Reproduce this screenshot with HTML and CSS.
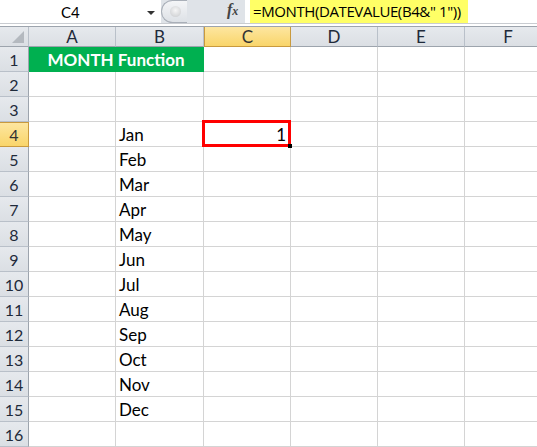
FILE: index.html
```html
<!DOCTYPE html>
<html>
<head>
<meta charset="utf-8">
<link rel="stylesheet" href="styles.css">
</head>
<body>
<div class="fbar">
  <div class="namebox"><span class="nb-text">C4</span><span class="nb-arrow"></span></div>
  <div class="mid">
    <div class="knob"><div class="dot"></div></div>
    <span class="fx">f<span class="fxx">x</span></span>
  </div>
  <div class="formula"><span class="hl">=MONTH(DATEVALUE(B4&amp;" 1"))</span></div>
</div>
<div class="sep"></div>
<div class="sheet">
  <div class="hd corner"><span class="tri"></span></div>
  <div class="hd col">A</div>
  <div class="hd col">B</div>
  <div class="hd col sel">C</div>
  <div class="hd col">D</div>
  <div class="hd col">E</div>
  <div class="hd col">F</div>

  <div class="hd row">1</div>
  <div class="c title">MONTH Function</div>
  <div class="c"></div><div class="c"></div><div class="c"></div><div class="c"></div>

  <div class="hd row">2</div><div class="c"></div><div class="c"></div><div class="c"></div><div class="c"></div><div class="c"></div><div class="c"></div>
  <div class="hd row">3</div><div class="c"></div><div class="c"></div><div class="c"></div><div class="c"></div><div class="c"></div><div class="c"></div>
  <div class="hd row sel">4</div><div class="c"></div><div class="c">Jan</div><div class="c active"><span class="num">1</span><span class="handle"></span></div><div class="c"></div><div class="c"></div><div class="c"></div>
  <div class="hd row">5</div><div class="c"></div><div class="c">Feb</div><div class="c"></div><div class="c"></div><div class="c"></div><div class="c"></div>
  <div class="hd row">6</div><div class="c"></div><div class="c">Mar</div><div class="c"></div><div class="c"></div><div class="c"></div><div class="c"></div>
  <div class="hd row">7</div><div class="c"></div><div class="c">Apr</div><div class="c"></div><div class="c"></div><div class="c"></div><div class="c"></div>
  <div class="hd row">8</div><div class="c"></div><div class="c">May</div><div class="c"></div><div class="c"></div><div class="c"></div><div class="c"></div>
  <div class="hd row">9</div><div class="c"></div><div class="c">Jun</div><div class="c"></div><div class="c"></div><div class="c"></div><div class="c"></div>
  <div class="hd row">10</div><div class="c"></div><div class="c">Jul</div><div class="c"></div><div class="c"></div><div class="c"></div><div class="c"></div>
  <div class="hd row">11</div><div class="c"></div><div class="c">Aug</div><div class="c"></div><div class="c"></div><div class="c"></div><div class="c"></div>
  <div class="hd row">12</div><div class="c"></div><div class="c">Sep</div><div class="c"></div><div class="c"></div><div class="c"></div><div class="c"></div>
  <div class="hd row">13</div><div class="c"></div><div class="c">Oct</div><div class="c"></div><div class="c"></div><div class="c"></div><div class="c"></div>
  <div class="hd row">14</div><div class="c"></div><div class="c">Nov</div><div class="c"></div><div class="c"></div><div class="c"></div><div class="c"></div>
  <div class="hd row">15</div><div class="c"></div><div class="c">Dec</div><div class="c"></div><div class="c"></div><div class="c"></div><div class="c"></div>
  <div class="hd row">16</div><div class="c"></div><div class="c"></div><div class="c"></div><div class="c"></div><div class="c"></div><div class="c"></div>
</div>
</body>
</html>
```
FILE: styles.css
```css
html, body {
  margin: 0;
  padding: 0;
  width: 537px;
  height: 447px;
  overflow: hidden;
  background: #fff;
  font-family: Lato, "Open Sans", "Liberation Sans", sans-serif;
}
.fbar {
  display: flex;
  height: 23px;
  border-bottom: 1px solid #c9ccd1;
  background: #fff;
}
.namebox {
  width: 161px;
  display: flex;
  align-items: center;
  position: relative;
  font-size: 15px;
  color: #000;
}
.nb-text {
  margin-left: 61px;
}
.nb-arrow {
  position: absolute;
  left: 147px;
  top: 11px;
  width: 0;
  height: 0;
  border-left: 4px solid transparent;
  border-right: 4px solid transparent;
  border-top: 4px solid #333;
}
.mid {
  width: 84px;
  background: #dfe3e8;
  display: flex;
  align-items: center;
  position: relative;
}
.knob {
  width: 26px;
  height: 23px;
  box-sizing: border-box;
  border: 1px solid #a9afb8;
  border-right: none;
  border-radius: 12px 0 0 12px;
  background: linear-gradient(#f4f5f7, #dde1e6);
  display: flex;
  align-items: center;
  justify-content: center;
}
.dot {
  width: 11px;
  height: 11px;
  border-radius: 50%;
  background: radial-gradient(circle at 50% 40%, #f6f6f6, #c7c9cc);
  margin-left: 2px;
}
.fx {
  position: absolute;
  left: 66px;
  top: 1px;
  font-family: "Liberation Serif", serif;
  font-style: italic;
  font-weight: bold;
  font-size: 16px;
  color: #444;
}
.fxx {
  font-size: 12px;
}
.formula {
  flex: 1;
  background: #fff;
  padding-left: 5px;
}
.hl {
  display: inline-block;
  background: #ffff66;
  height: 23px;
  line-height: 23px;
  font-size: 15px;
  padding: 0 7px 0 3px;
  font-family: "Open Sans", "Liberation Sans", sans-serif;
  letter-spacing: -0.4px;
  color: #000;
}
.sep {
  height: 2px;
  background: #fff;
  border-bottom: 1px solid #9da4ad;
}
.sheet {
  display: grid;
  grid-template-columns: 29px 87px 88px 87px 87px 87px 87px;
  grid-template-rows: 20px repeat(16, 25px);
}
.hd {
  background: linear-gradient(#e6e9ed, #dbdfe4);
  color: #1e2a3a;
  font-size: 17px;
  box-sizing: border-box;
  display: flex;
  align-items: center;
  justify-content: center;
}
.col {
  border-right: 1px solid #b9c0c9;
  border-bottom: 1px solid #9da4ad;
}
.row {
  border-right: 1px solid #9da4ad;
  border-bottom: 1px solid #b9c0c9;
  font-size: 16px;
}
.corner {
  border-right: 1px solid #b9c0c9;
  border-bottom: 1px solid #9da4ad;
  position: relative;
}
.tri {
  position: absolute;
  right: 4px;
  bottom: 3px;
  width: 0;
  height: 0;
  border-left: 12px solid transparent;
  border-bottom: 12px solid #b4b9bf;
}
.hd.sel {
  background: linear-gradient(#fde6a0, #f9d56a);
  border-color: #c99a3e;
  color: #333;
}
.col.sel {
  border-left: 1px solid #c99a3e;
  border-bottom: 1px solid #c99a3e;
}
.row.sel {
  border-right: 1px solid #c99a3e;
  border-top: 1px solid #c99a3e;
}
.c {
  box-sizing: border-box;
  border-right: 1px solid #d4d4d4;
  border-bottom: 1px solid #d4d4d4;
  font-size: 17px;
  color: #000;
  padding: 0 3px;
  display: flex;
  align-items: center;
  white-space: nowrap;
}
.title {
  grid-column: span 2;
  background: #00b050;
  color: #fff;
  font-weight: bold;
  justify-content: center;
  border-color: #00b050;
  font-size: 17px;
}
.active {
  position: relative;
  justify-content: flex-end;
}
.active::before {
  content: "";
  position: absolute;
  left: -2px;
  top: -2px;
  right: -1px;
  bottom: -1px;
  border: 3px solid #ff0000;
}
.num {
  position: relative;
  margin-right: 1px;
}
.handle {
  position: absolute;
  right: -2px;
  bottom: -2px;
  width: 4px;
  height: 4px;
  background: #000;
}
```
